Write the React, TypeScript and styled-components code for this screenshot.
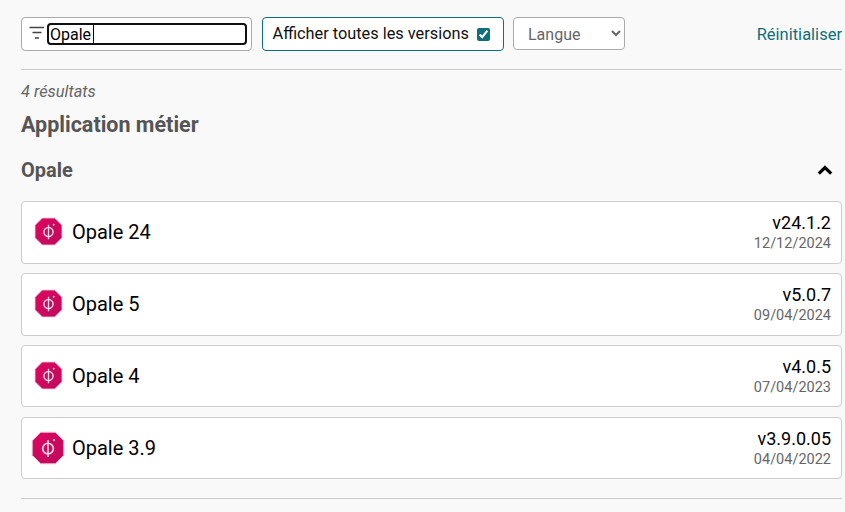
import styled, { createGlobalStyle } from 'styled-components'

const teal = '#0f6e7c'

const versions = [
  { name: 'Opale 24', version: 'v24.1.2', date: '12/12/2024', wide: false },
  { name: 'Opale 5', version: 'v5.0.7', date: '09/04/2024', wide: false },
  { name: 'Opale 4', version: 'v4.0.5', date: '07/04/2023', wide: false },
  { name: 'Opale 3.9', version: 'v3.9.0.05', date: '04/04/2022', wide: true },
]

const OpaleLogo = ({ wide }: { wide: boolean }) => {
  const size = wide ? 34 : 29
  return (
    <LogoSlot>
      <svg width={size} height={size} viewBox="0 0 28 28">
        <defs>
          <linearGradient id="opale" x1="0" y1="0" x2="1" y2="1">
            <stop offset="0" stopColor="#e0045f" />
            <stop offset="1" stopColor="#bd0a5e" />
          </linearGradient>
        </defs>
        <polygon
          points="8,1 20,1 27,8 27,20 20,27 8,27 1,20 1,8"
          fill="url(#opale)"
          stroke="#e9c3d2"
          strokeWidth="0.8"
          strokeLinejoin="round"
        />
        <circle cx="14" cy="14.5" r="4.4" fill="none" stroke="#f5dbe5" strokeWidth="1.4" />
        <path d="M14 7.5v14" stroke="#f5dbe5" strokeWidth="1.3" />
        <circle cx="19" cy="7.5" r="0.9" fill="#f5dbe5" />
      </svg>
    </LogoSlot>
  )
}

const App = () => {
  return (
    <Page>
      <GlobalStyle />
      <Toolbar>
        <FilterBox>
          <svg width="16" height="16" viewBox="0 0 16 16">
            <path d="M0.5 2.5h14.5M3.5 7.5h9M6 13h4" stroke="#444" strokeWidth="1.5" fill="none" />
          </svg>
          <FilterField>
            <FilterInput autoFocus defaultValue="Opale" />
            <Caret />
          </FilterField>
        </FilterBox>
        <VersionsToggle>
          Afficher toutes les versions
          <VersionsCheck type="checkbox" defaultChecked />
        </VersionsToggle>
        <LangSelect defaultValue="">
          <option value="">Langue</option>
        </LangSelect>
        <ResetLink>Réinitialiser</ResetLink>
      </Toolbar>
      <Divider />
      <ResultCount>4 résultats</ResultCount>
      <SectionTitle>Application métier</SectionTitle>
      <GroupHeader>
        <GroupTitle>Opale</GroupTitle>
        <svg width="16" height="10" viewBox="0 0 16 10">
          <path d="M1.8 8.6l6.2-6 6.2 6" stroke="#000" strokeWidth="3.2" fill="none" />
        </svg>
      </GroupHeader>
      <CardList>
        {versions.map((item) => (
          <Card key={item.name}>
            <OpaleLogo wide={item.wide} />
            <CardName>{item.name}</CardName>
            <CardMeta>
              <VersionNumber>{item.version}</VersionNumber>
              <VersionDate>{item.date}</VersionDate>
            </CardMeta>
          </Card>
        ))}
      </CardList>
      <BottomDivider />
    </Page>
  )
}

const GlobalStyle = createGlobalStyle`
  html, body {
    margin: 0;
    background: #f9f9f9;
    font-family: Roboto, sans-serif;
    overflow: hidden;
  }
`

const Page = styled.div`
  width: 821px;
  height: 512px;
  padding: 17px 3px 0 21px;
`

const Toolbar = styled.div`
  display: flex;
  align-items: flex-start;
  height: 34px;
`

const FilterBox = styled.div`
  box-sizing: border-box;
  width: 231px;
  height: 34px;
  display: flex;
  align-items: center;
  gap: 3px;
  padding: 0 5px 0 7px;
  background: #fff;
  border: 1px solid #aaa;
  border-radius: 4px;

  svg {
    flex: none;
    margin-top: -3px;
  }
`

const FilterField = styled.div`
  position: relative;
  flex: 1;
  min-width: 0;
  display: flex;
`

const FilterInput = styled.input`
  flex: 1;
  min-width: 0;
  box-sizing: border-box;
  height: 20px;
  margin: 0;
  padding: 0 1px 0 2px;
  border: none;
  font-family: Roboto, sans-serif;
  font-size: 16px;
  color: #000;
  background: #fff;
`

const Caret = styled.span`
  position: absolute;
  left: 45px;
  top: 1px;
  width: 1px;
  height: 19px;
  background: #000;
`

const VersionsToggle = styled.label`
  box-sizing: border-box;
  width: 242px;
  height: 34px;
  margin-left: 10px;
  display: flex;
  align-items: center;
  padding: 0 13px 2px 9.5px;
  justify-content: space-between;
  font-size: 16.32px;
  color: #111;
  background: #fff;
  border: 1px solid ${teal};
  border-radius: 4px;
`

const VersionsCheck = styled.input`
  width: 13px;
  height: 13px;
  margin: 2px 0 0;
  accent-color: ${teal};
`

const LangSelect = styled.select`
  box-sizing: border-box;
  width: 112px;
  height: 33px;
  margin-left: 9px;
  padding: 2px 0 0 10px;
  font-family: Roboto, sans-serif;
  font-size: 16px;
  color: #666;
  background: #fff;
  border: 1px solid #aaa;
  border-radius: 4px;
`

const ResetLink = styled.a`
  margin-left: auto;
  margin-top: 8px;
  font-size: 16.5px;
  line-height: 19px;
  color: ${teal};
`

const Divider = styled.div`
  height: 1px;
  margin-top: 18px;
  background: #ccc;
`

const ResultCount = styled.div`
  margin-top: 12px;
  font-size: 16.4px;
  line-height: 19px;
  font-style: italic;
  color: #666;
`

const SectionTitle = styled.h2`
  margin: 11px 0 0;
  font-size: 21.5px;
  line-height: 26px;
  font-weight: 700;
  color: #555;
`

const GroupHeader = styled.div`
  display: flex;
  align-items: center;
  justify-content: space-between;
  margin-top: 20px;
  height: 24px;
  padding-right: 9px;
`

const GroupTitle = styled.h3`
  margin: 0;
  font-size: 20px;
  font-weight: 700;
  color: #555;
`

const CardList = styled.div`
  display: flex;
  flex-direction: column;
  gap: 9.5px;
  margin-top: 19.3px;
`

const Card = styled.div`
  box-sizing: border-box;
  height: 62.4px;
  display: flex;
  align-items: center;
  padding: 0 10px;
  background: #fff;
  border: 1px solid #ccc;
  border-radius: 4px;
`

const LogoSlot = styled.div`
  width: 34px;
  display: flex;
  justify-content: center;
  margin: -1px 7px 0 -1px;
`

const CardName = styled.div`
  font-size: 20px;
  margin-top: -1px;
  color: #000;
`

const CardMeta = styled.div`
  margin-left: auto;
  text-align: right;
`

const VersionNumber = styled.div`
  font-size: 18px;
  line-height: 21px;
  color: #000;
`

const VersionDate = styled.div`
  font-size: 14.5px;
  line-height: 18px;
  margin-top: 2px;
  color: #666;
`

const BottomDivider = styled(Divider)`
  margin-top: 18.6px;
`

export default App
